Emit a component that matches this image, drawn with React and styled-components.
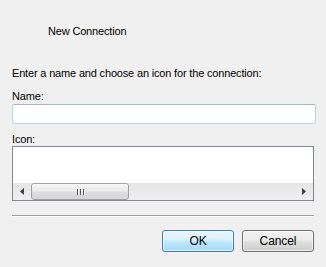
import React from "react";
import styled, { createGlobalStyle } from "styled-components";

const Global = createGlobalStyle`
  html, body { margin: 0; padding: 0; background: #f0f0f0; }
  body { font-family: "Liberation Sans", Arial, sans-serif; }
`;

const Dialog = styled.div`
  width: 326px;
  height: 267px;
  box-sizing: border-box;
  background: #f0f0f0;
  padding: 0 11px 0 12px;
  display: flex;
  flex-direction: column;
  font-family: "Liberation Sans", Arial, sans-serif;
  font-size: 11px;
  letter-spacing: -0.17px;
  color: #000;
`;

const Title = styled.div`
  margin-top: 24px;
  padding-left: 36px;
  line-height: 14px;
  height: 14px;
`;

const Text = styled.div`
  margin-top: ${(p) => p.$mt}px;
  line-height: 14px;
  height: 14px;
  white-space: nowrap;
`;

const Input = styled.input`
  margin-top: 1px;
  width: 304px;
  height: 20px;
  box-sizing: border-box;
  border: 1px solid #c3cfdc;
  border-top-color: #a7b5c6;
  border-radius: 2px;
  background: #fff;
  outline: none;
  padding: 0 3px;
  font: inherit;
`;

const List = styled.div`
  width: 302px;
  height: 55px;
  box-sizing: border-box;
  border: 1px solid #828790;
  background: #fff;
  display: flex;
  flex-direction: column;
  justify-content: flex-end;
`;

const ScrollBar = styled.div`
  height: 17px;
  display: flex;
  align-items: stretch;
  background: linear-gradient(#e6e6e6, #efefef);
`;

const ArrowBtn = styled.div`
  width: 18px;
  display: flex;
  align-items: center;
  justify-content: center;
`;

const Track = styled.div`
  flex: 1;
  display: flex;
  align-items: stretch;
`;

const Thumb = styled.div`
  width: 98px;
  box-sizing: border-box;
  border: 1px solid #a2a2a2;
  border-radius: 3px;
  background: linear-gradient(#f6f6f6 0%, #ececec 45%, #dcdcdc 55%, #d6d6d6 100%);
  display: flex;
  align-items: center;
  justify-content: center;
`;

const Grip = styled.span`
  width: 1px;
  height: 6px;
  background: #555;
  box-shadow: 1px 0 0 #fff;
  margin: 0 1px;
`;

const Separator = styled.div`
  margin-top: 14px;
  width: 302px;
  height: 1px;
  border-top: 1px solid #a0a0a0;
  background: #fff;
`;

const Buttons = styled.div`
  margin-top: 13px;
  width: 302px;
  display: flex;
  justify-content: flex-end;
  gap: 8px;
`;

const Button = styled.button`
  width: 72px;
  height: 22px;
  box-sizing: border-box;
  border-radius: 3px;
  border: 1px solid ${(p) => (p.$default ? "#3c7fb1" : "#707070")};
  background: ${(p) =>
    p.$default
      ? "linear-gradient(#eaf6fd 0%, #d9f0fc 45%, #bee6fd 55%, #a7d9f5 100%)"
      : "linear-gradient(#f2f2f2 0%, #ebebeb 45%, #dddddd 55%, #cfcfcf 100%)"};
  box-shadow: inset 0 0 0 1px rgba(255, 255, 255, 0.65);
  font-family: "Liberation Sans", Arial, sans-serif;
  font-size: 12px;
  letter-spacing: -0.1px;
  color: #000;
  padding: 0;
`;

const Arrow = ({ dir }) => (
  <svg width="4" height="7" viewBox="0 0 4 7">
    {dir === "left" ? (
      <path d="M4 0 L0 3.5 L4 7 Z" fill="#404040" />
    ) : (
      <path d="M0 0 L4 3.5 L0 7 Z" fill="#404040" />
    )}
  </svg>
);

export default function App() {
  return (
    <>
      <Global />
      <Dialog>
        <Title>New Connection</Title>
        <Text $mt={28}>Enter a name and choose an icon for the connection:</Text>
        <Text $mt={9}>Name:</Text>
        <Input type="text" />
        <Text $mt={8}>Icon:</Text>
        <List>
          <ScrollBar>
            <ArrowBtn>
              <Arrow dir="left" />
            </ArrowBtn>
            <Track>
              <Thumb>
                <Grip />
                <Grip />
                <Grip />
              </Thumb>
            </Track>
            <ArrowBtn>
              <Arrow dir="right" />
            </ArrowBtn>
          </ScrollBar>
        </List>
        <Separator />
        <Buttons>
          <Button $default>OK</Button>
          <Button>Cancel</Button>
        </Buttons>
      </Dialog>
    </>
  );
}
